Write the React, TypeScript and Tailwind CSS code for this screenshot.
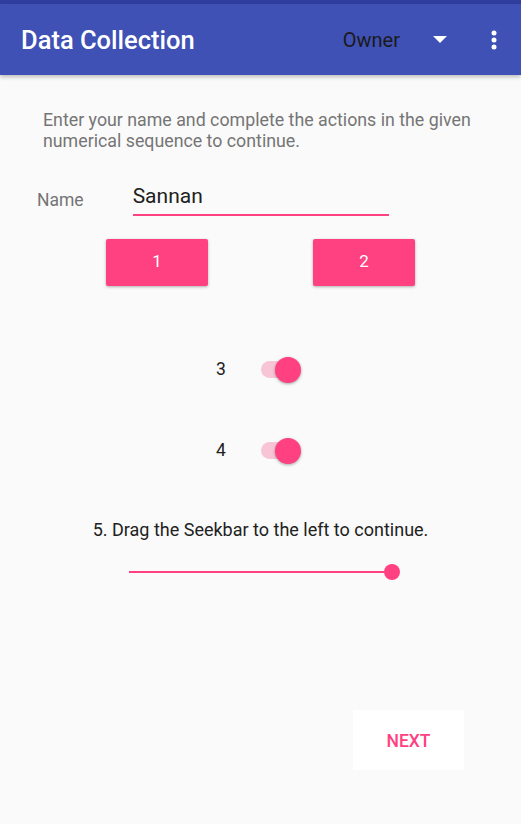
export default function App() {
  return (
    <div
      className="w-[521px] h-[824px] bg-[#fafafa] flex flex-col overflow-hidden"
      style={{ fontFamily: 'Roboto, "Noto Sans", sans-serif' }}
    >
      {/* status bar */}
      <div className="h-[4px] bg-[#303f9f]" />

      {/* toolbar */}
      <div className="h-[71px] bg-[#3f51b5] flex items-center shadow-[0_2px_4px_rgba(0,0,0,0.25)] relative z-10">
        <div className="ml-[21px] mt-[2px] text-white text-[25.5px] font-medium">Data Collection</div>
        <div className="ml-auto flex items-center">
          <span className="text-[20px] text-[#1a1a1a] mt-[1px]">Owner</span>
          <svg className="ml-[33px]" width="14" height="7" viewBox="0 0 14 7">
            <path d="M0 0 L14 0 L7 7 Z" fill="white" />
          </svg>
          <svg className="ml-[44px] mr-[24px]" width="6" height="20" viewBox="0 0 6 20">
            <circle cx="3" cy="3" r="2.5" fill="white" />
            <circle cx="3" cy="10" r="2.5" fill="white" />
            <circle cx="3" cy="17" r="2.5" fill="white" />
          </svg>
        </div>
      </div>

      {/* body */}
      <div className="flex flex-col">
        <p className="mt-[34px] ml-[43px] mr-[30px] text-[17.8px] leading-[21px] text-[#757575]">
          Enter your name and complete the actions in the given numerical sequence to continue.
        </p>

        <div className="mt-[30px] flex items-end">
          <span className="ml-[37px] mb-[2px] text-[17.5px] text-[#757575]">Name</span>
          <div className="ml-[49px] w-[256px] border-b-2 border-[#ff4081] pb-[1px]">
            <span className="text-[21px] text-[#212121]">Sannan</span>
          </div>
        </div>

        <div className="mt-[23px] flex">
          <button className="ml-[106px] w-[102px] h-[47px] bg-[#ff4081] rounded-[2px] text-white text-[17px] shadow-[0_1px_3px_rgba(0,0,0,0.3)]">
            1
          </button>
          <button className="ml-[105px] w-[102px] h-[47px] bg-[#ff4081] rounded-[2px] text-white text-[17px] shadow-[0_1px_3px_rgba(0,0,0,0.3)]">
            2
          </button>
        </div>

        <SwitchRow label="3" className="mt-[70px]" />
        <SwitchRow label="4" className="mt-[53px]" />

        <div className="mt-[51px] text-center text-[18px] text-[#212121]">
          5. Drag the Seekbar to the left to continue.
        </div>

        <div className="mt-[20px] ml-[129px] w-[272px] h-[18px] flex items-center relative">
          <div className="w-[263px] h-[2px] bg-[#ff4081]" />
          <div className="absolute left-[255px] top-[1px] w-[16px] h-[16px] rounded-full bg-[#ff4081]" />
        </div>

        <div className="mt-[129px] flex justify-end">
          <button className="mr-[57px] w-[111px] h-[60px] pt-[3px] bg-white text-[#ff4081] text-[17.5px] font-medium">
            NEXT
          </button>
        </div>
      </div>
    </div>
  );
}

function SwitchRow({ label, className }: { label: string; className: string }) {
  return (
    <div className={`${className} flex items-center h-[28px]`}>
      <span className="ml-[216px] text-[17.5px] text-[#212121] w-[12px]">{label}</span>
      <div className="ml-[33px] relative w-[40px] h-[28px] flex items-center">
        <div className="w-[38px] h-[17px] rounded-full bg-[#f8c5d6]" />
        <div className="absolute left-[14px] top-[1px] w-[26px] h-[26px] rounded-full bg-[#ff4081] shadow-[0_1px_3px_rgba(0,0,0,0.35)]" />
      </div>
    </div>
  );
}
